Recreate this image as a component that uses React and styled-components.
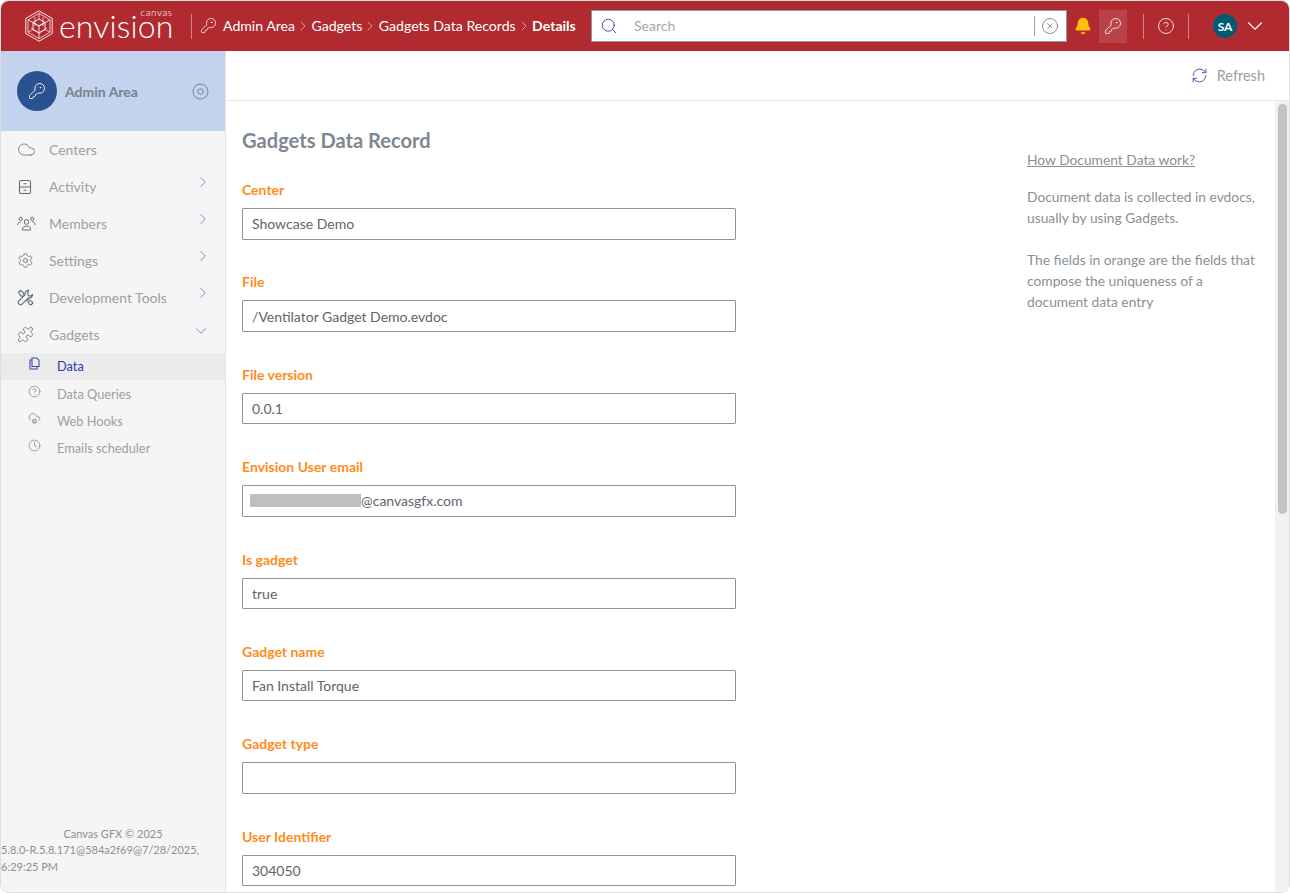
import styled, { createGlobalStyle } from "styled-components"
import {
  Bell,
  ChevronDown,
  ChevronRight,
  CircleHelp,
  CircleX,
  Clock,
  Cloud,
  CloudCog,
  KeyRound,
  Puzzle,
  RefreshCw,
  Search,
  Settings,
} from "lucide-react"

const GlobalStyle = createGlobalStyle`
  html, body { margin:0; padding:0; height:100%; background:#fff; }
  body { font-family:Lato, "Open Sans", sans-serif; overflow:hidden; }
  * { box-sizing:border-box; }
`

const Frame = styled.div`
  width:1290px;
  height:893px;
  display:flex;
  flex-direction:column;
  border:1px solid #dedede;
  border-radius:9px;
  overflow:hidden;
  background:#fff;
`
const Header = styled.header`
  height:50px;
  flex:none;
  background:#b02a30;
  display:flex;
  align-items:center;
  color:#fff;
`
const LogoBox = styled.div`
  width:190px;
  height:100%;
  flex:none;
  display:flex;
  align-items:center;
  padding-left:24px;
  gap:6px;
`
const Wordmark = styled.div`
  position:relative;
  font-size:32px;
  font-weight:300;
  line-height:32px;
  letter-spacing:.15px;
  margin-top:-1px;
`
const WordmarkSmall = styled.span`
  position:absolute;
  right:1px;
  top:-3px;
  font-size:10px;
  line-height:10px;
  letter-spacing:.5px;
`
const VLine = styled.div`
  width:1px;
  height:25px;
  flex:none;
  background:rgba(255,255,255,.42);
  margin:${(p) => p.$margin || "0"};
`
const Crumbs = styled.nav`
  width:399px;
  flex:none;
  display:flex;
  align-items:center;
  padding:0 0 1px 8px;
  font-size:14.1px;
  white-space:nowrap;
`
const Crumb = styled.span`
  font-weight:${(p) => (p.$current ? 700 : 400)};
`
const CrumbKey = styled(KeyRound)`
  margin-right:6px;
`
const CrumbSep = styled(ChevronRight)`
  opacity:.8;
  margin-right:.4px;
`
const SearchBox = styled.div`
  width:476px;
  height:32px;
  flex:none;
  background:#fff;
  border:1px solid #8d98a0;
  display:flex;
  align-items:center;
  color:#3f4bb4;
  padding:0 7px 0 8px;
`
const SearchText = styled.span`
  flex:1;
  color:#a3a9ae;
  font-size:14px;
  margin:0 0 1px 16px;
`
const SearchSep = styled.div`
  width:1px;
  height:20px;
  background:#9aa2a8;
  margin-right:6px;
`
const IconButton = styled.div`
  width:${(p) => p.$width || "28px"};
  height:33px;
  flex:none;
  display:flex;
  align-items:center;
  justify-content:center;
  background:${(p) => (p.$active ? "rgba(255,255,255,.12)" : "transparent")};
`
const Avatar = styled.div`
  width:24px;
  height:24px;
  border-radius:50%;
  background:#005a73;
  font-size:12px;
  font-weight:700;
  display:flex;
  align-items:center;
  justify-content:center;
  flex:none;
  margin:0 5px 0 24px;
`
const Body = styled.div`
  flex:1;
  display:flex;
  min-height:0;
`
const Sidebar = styled.aside`
  width:225px;
  flex:none;
  background:#f5f5f5;
  border-right:1px solid #e4e4e4;
  display:flex;
  flex-direction:column;
`
const AreaCard = styled.div`
  height:80px;
  flex:none;
  background:#c3d3ed;
  display:flex;
  align-items:center;
  padding:0 16px;
  color:#76818d;
`
const AreaBadge = styled.div`
  width:40px;
  height:40px;
  border-radius:50%;
  background:#2b5290;
  color:#fff;
  display:flex;
  align-items:center;
  justify-content:center;
  flex:none;
`
const AreaName = styled.div`
  flex:1;
  margin-left:8px;
  font-size:14px;
  font-weight:700;
`
const Nav = styled.nav`
  flex:1;
`
const NavRow = styled.div`
  height:37px;
  display:flex;
  align-items:center;
  padding-left:16px;
  color:#9aa0a6;
  font-size:14px;
  position:relative;
`
const NavIcon = styled.span`
  width:32px;
  flex:none;
  display:flex;
  color:#5f6a73;
`
const NavArrow = styled.span`
  position:absolute;
  left:${(p) => (p.$down ? "191px" : "193px")};
  top:${(p) => (p.$down ? "6px" : "5px")};
  display:flex;
  color:#5a66c8;
`
const SubRow = styled.div`
  height:27px;
  display:flex;
  align-items:center;
  padding:0 0 ${(p) => (p.$active ? "1px" : "0")} 27px;
  font-size:12.8px;
  color:${(p) => (p.$active ? "#2c37a8" : "#9aa0a6")};
  background:${(p) => (p.$active ? "#ebebeb" : "transparent")};
`
const SubIcon = styled.span`
  width:29px;
  flex:none;
  display:flex;
  margin-top:-5px;
  color:${(p) => (p.$active ? "#3f4bb4" : "#5f6a73")};
`
const Foot = styled.footer`
  padding:0 0 17px 0;
  font-size:11px;
  line-height:16.5px;
  color:#8a9096;
`
const FootCenter = styled.div`
  text-align:center;
`
const Main = styled.main`
  flex:1;
  min-width:0;
  display:flex;
  flex-direction:column;
`
const Toolbar = styled.div`
  height:50px;
  flex:none;
  border-bottom:1px solid #e8e8e8;
  display:flex;
  align-items:center;
  justify-content:flex-end;
  gap:9px;
  padding:0 24px 0 0;
  font-size:14.5px;
  color:#9aa0a6;
`
const RefreshIcon = styled(RefreshCw)`
  color:#3f4bb4;
`
const Pane = styled.div`
  flex:1;
  min-height:0;
  display:flex;
`
const Content = styled.div`
  flex:1;
  min-width:0;
  overflow:hidden;
  display:flex;
  padding:24px 0 0 16px;
`
const ScrollTrack = styled.div`
  width:14px;
  flex:none;
  background:#f1f1f1;
  padding:3px 2px 0 3px;
`
const ScrollThumb = styled.div`
  height:410px;
  background:#c1c4c7;
  border-radius:5px;
`
const FormCol = styled.div`
  width:785px;
  flex:none;
`
const Title = styled.h1`
  margin:0 0 26px;
  font-size:20.1px;
  line-height:30px;
  font-weight:700;
  color:#7d8892;
`
const Field = styled.div`
  height:92.4px;
`
const Label = styled.div`
  font-size:14px;
  line-height:17px;
  font-weight:700;
  color:#ff8c1a;
  margin-bottom:10px;
`
const Value = styled.div`
  width:494px;
  height:31.5px;
  border:1px solid #8f9499;
  border-radius:1px;
  padding:0 9px;
  display:flex;
  align-items:center;
  font-size:14px;
  color:#5d666e;
`
const Redacted = styled.span`
  width:111px;
  height:13px;
  background:#bfbfbf;
  flex:none;
  margin-left:-2px;
`
const Aside = styled.div`
  width:232px;
  padding-top:24px;
  font-size:13.8px;
  line-height:21px;
  color:#8a9096;
`
const HelpLink = styled.a`
  display:block;
  color:#8a9096;
  text-decoration:underline;
  margin-bottom:16px;
`
const Note = styled.p`
  margin:0 0 21px;
`

const FileCabinet = ({ size = 16 }) => (
  <svg width={size} height={size} viewBox="0 0 16 16" fill="none" stroke="currentColor" strokeWidth="1.1">
    <rect x="2.5" y="1.5" width="11" height="13" rx="1.5" />
    <path d="M2.5 8h11M6.5 4.8h3M6.5 11.2h3" />
  </svg>
)
const People = ({ size = 19 }) => (
  <svg width={size} height={size} viewBox="0 0 19 19" fill="none" stroke="currentColor" strokeWidth="1">
    <circle cx="9.5" cy="8" r="2.3" />
    <path d="M5.5 16v-1.2c0-1.6 1.6-2.7 4-2.7s4 1.1 4 2.7V16z" />
    <circle cx="3.8" cy="4.8" r="1.6" />
    <circle cx="15.2" cy="4.8" r="1.6" />
    <path d="M.8 11c0-2 1.2-3.2 3-3.2M18.2 11c0-2-1.2-3.2-3-3.2" />
  </svg>
)
const Tools = ({ size = 17 }) => (
  <svg width={size} height={size} viewBox="0 0 17 17" fill="none" stroke="currentColor" strokeWidth="1.1" strokeLinejoin="round">
    <path d="M1.5 3.5l2-2 3.2 2.4v1.6L13 11.8l1.8.4 1 2-1.8 1.8-2-1-.4-1.8L5.3 7H3.8z" />
    <path d="M11.6 1.4a3.2 3.2 0 0 0-3.4 4.2L1.6 12.2a1.6 1.6 0 0 0 0 2.3l.9.9a1.6 1.6 0 0 0 2.3 0l6.6-6.6a3.2 3.2 0 0 0 4.2-3.4l-2 1.8-2.2-.6-.6-2.2z" fill="#f5f5f5" />
  </svg>
)
const Pages = ({ size = 13 }) => (
  <svg width={size} height={size} viewBox="0 0 13 13" fill="none" stroke="currentColor" strokeWidth="1.1">
    <path d="M4 1h4.8L11 3.2V9.5H4z" />
    <path d="M4 3H2v9h7V9.5" />
  </svg>
)
const Target = () => (
  <svg width="17" height="17" viewBox="0 0 17 17" fill="none" stroke="currentColor" strokeWidth="1">
    <circle cx="8.5" cy="8.5" r="7.5" />
    <circle cx="8.5" cy="8.5" r="2.7" />
  </svg>
)
const LogoMark = () => (
  <svg width="28" height="32" viewBox="0 0 28 32" fill="none" stroke="#fff" strokeWidth=".9">
    <path d="M14 .8L27.2 8.400v15.200L14 31.200.8 23.600V8.400z" />
    <path d="M14 3.400L25 9.800v12.400L14 28.600 3 22.200V9.800z" strokeOpacity=".8" />
    <path d="M14 9L20 12.500v7L14 23l-6-3.500v-7z" />
    <path d="M3 9.800l11 6.200 11-6.200M14 16v12.600M8 12.500l6 3.500 6-3.500" strokeOpacity=".9" />
    <path d="M14 3.400V9M3 22.200l5-2.700M25 22.200l-5-2.700M10 7l0 9M18 7l0 9M6 18l8 5 8-5" strokeOpacity=".75" />
  </svg>
)

const navItems = [
  { name: "Centers", icon: <Cloud size={19} strokeWidth={1} /> },
  { name: "Activity", icon: <FileCabinet />, arrow: "right" },
  { name: "Members", icon: <People />, arrow: "right" },
  { name: "Settings", icon: <Settings size={17} strokeWidth={1.1} />, arrow: "right" },
  { name: "Development Tools", icon: <Tools />, arrow: "right" },
  { name: "Gadgets", icon: <Puzzle size={17} strokeWidth={1.1} />, arrow: "down" },
]

const subItems = [
  { name: "Data", icon: <Pages />, active: true },
  { name: "Data Queries", icon: <CircleHelp size={13} strokeWidth={1.1} /> },
  { name: "Web Hooks", icon: <CloudCog size={13} strokeWidth={1.1} /> },
  { name: "Emails scheduler", icon: <Clock size={13} strokeWidth={1.1} /> },
]

const fields = [
  { label: "Center", value: "Showcase Demo" },
  { label: "File", value: "/Ventilator Gadget Demo.evdoc" },
  { label: "File version", value: "0.0.1" },
  { label: "Envision User email", value: "@canvasgfx.com", redacted: true },
  { label: "Is gadget", value: "true" },
  { label: "Gadget name", value: "Fan Install Torque" },
  { label: "Gadget type", value: "" },
  { label: "User Identifier", value: "304050" },
]

const App = () => {
  return (
    <Frame>
      <GlobalStyle />
      <Header>
        <LogoBox>
          <LogoMark />
          <Wordmark>
            envision
            <WordmarkSmall>canvas</WordmarkSmall>
          </Wordmark>
        </LogoBox>
        <VLine />
        <Crumbs>
          <CrumbKey size={17} strokeWidth={1.1} />
          <Crumb>Admin Area</Crumb>
          <CrumbSep size={16} strokeWidth={1} />
          <Crumb>Gadgets</Crumb>
          <CrumbSep size={16} strokeWidth={1} />
          <Crumb>Gadgets Data Records</Crumb>
          <CrumbSep size={16} strokeWidth={1} />
          <Crumb $current>Details</Crumb>
        </Crumbs>
        <SearchBox>
          <Search size={18} strokeWidth={1.3} />
          <SearchText>Search</SearchText>
          <SearchSep />
          <CircleX size={18} strokeWidth={1} color="#5f6a73" />
        </SearchBox>
        <IconButton $width="32px">
          <Bell size={18} fill="#ffc107" color="#ffc107" />
        </IconButton>
        <IconButton $active>
          <KeyRound size={18} strokeWidth={1.1} />
        </IconButton>
        <VLine $margin="0 8px 0 16px" />
        <IconButton>
          <CircleHelp size={18} strokeWidth={1.1} />
        </IconButton>
        <VLine $margin="0 0 0 8px" />
        <Avatar>SA</Avatar>
        <ChevronDown size={26} strokeWidth={1} />
      </Header>
      <Body>
        <Sidebar>
          <AreaCard>
            <AreaBadge>
              <KeyRound size={18} strokeWidth={1.2} />
            </AreaBadge>
            <AreaName>Admin Area</AreaName>
            <Target />
          </AreaCard>
          <Nav>
            {navItems.map((item) => (
              <NavRow key={item.name}>
                <NavIcon>{item.icon}</NavIcon>
                {item.name}
                {item.arrow === "right" && (
                  <NavArrow>
                    <ChevronRight size={18} strokeWidth={1} />
                  </NavArrow>
                )}
                {item.arrow === "down" && (
                  <NavArrow $down>
                    <ChevronDown size={18} strokeWidth={1} />
                  </NavArrow>
                )}
              </NavRow>
            ))}
            {subItems.map((item) => (
              <SubRow key={item.name} $active={item.active}>
                <SubIcon $active={item.active}>{item.icon}</SubIcon>
                {item.name}
              </SubRow>
            ))}
          </Nav>
          <Foot>
            <FootCenter>Canvas GFX © 2025</FootCenter>
            5.8.0-R.5.8.171@584a2f69@7/28/2025, 6:29:25 PM
          </Foot>
        </Sidebar>
        <Main>
          <Toolbar>
            <RefreshIcon size={17} strokeWidth={1.3} />
            Refresh
          </Toolbar>
          <Pane>
            <Content>
              <FormCol>
                <Title>Gadgets Data Record</Title>
                {fields.map((f) => (
                  <Field key={f.label}>
                    <Label>{f.label}</Label>
                    <Value>
                      {f.redacted && <Redacted />}
                      {f.value}
                    </Value>
                  </Field>
                ))}
              </FormCol>
              <Aside>
                <HelpLink>How Document Data work?</HelpLink>
                <Note>Document data is collected in evdocs, usually by using Gadgets.</Note>
                <Note>The fields in orange are the fields that compose the uniqueness of a document data entry</Note>
              </Aside>
            </Content>
            <ScrollTrack>
              <ScrollThumb />
            </ScrollTrack>
          </Pane>
        </Main>
      </Body>
    </Frame>
  )
}

export default App
